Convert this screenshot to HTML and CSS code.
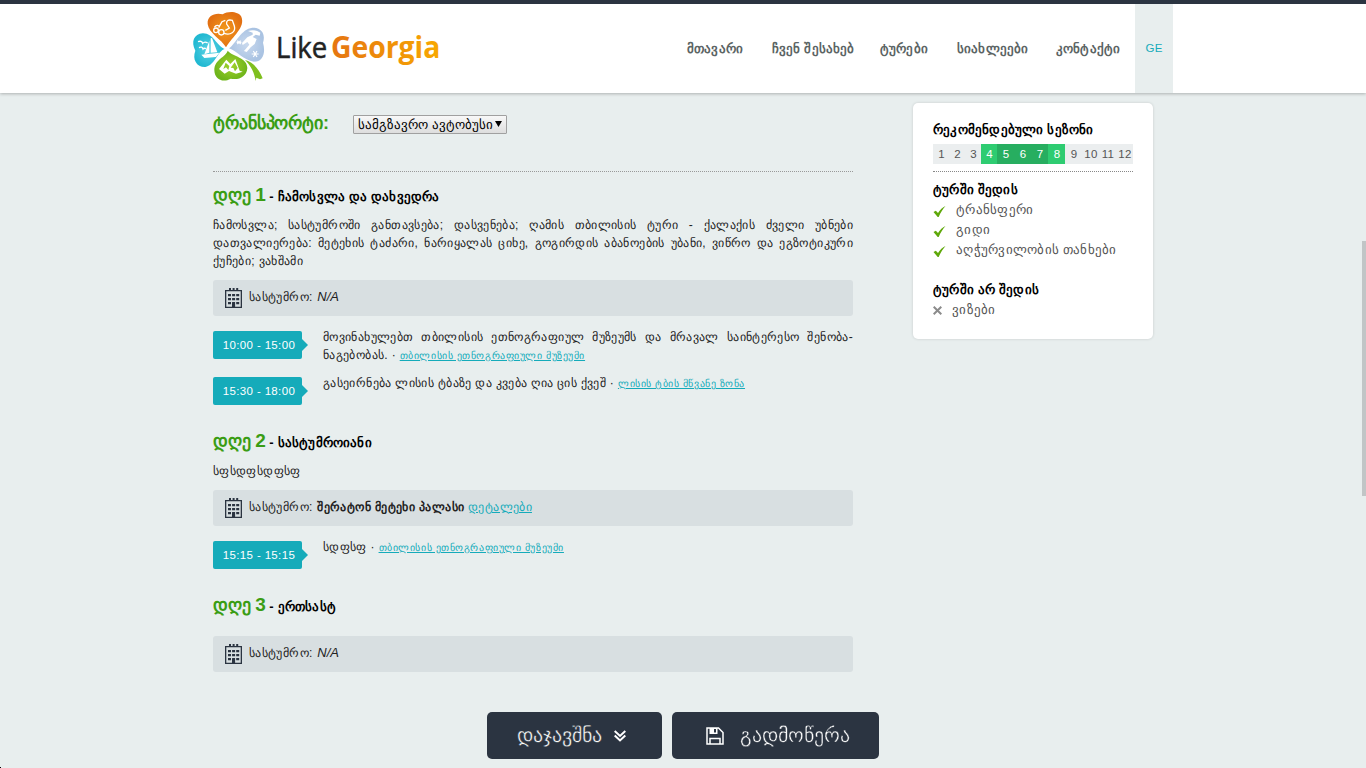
FILE: index.html
```html
<!DOCTYPE html>
<html>
<head>
<meta charset="utf-8">
<title>LikeGeorgia</title>
<link rel="stylesheet" href="styles.css">
</head>
<body>
<svg width="0" height="0" class="defs">
  <symbol id="hotel" viewBox="0 0 17 20">
    <path fill="#2b3441" fill-rule="evenodd" d="M0 2h17v18H0zM1.300 3.300v15.400H7V15h3v3.700h5.700V3.300z"/>
    <path fill="#2b3441" d="M4 0h2v2H4zM7.600 0h2v2h-2zM11.200 0h2v2h-2zM3 6h3v2.300H3zM7.100 6h3v2.300h-3zM11.200 6h3v2.300h-3zM3 10h3v2.300H3zM7.100 10h3v2.300h-3zM11.200 10h3v2.300h-3zM3 14h3v2.300H3zM7.100 14h3v5h-3zM11.200 14h3v2.300h-3z"/>
  </symbol>
  <symbol id="check" viewBox="0 0 12 11"><path fill="#5fa80a" d="M0 6 2.300 4.800 4.500 7C6.500 4 9 1.200 12 0 9.500 3 7 6.500 5.200 11L4.200 11z"/></symbol>
</svg>
<header class="top">
  <div class="wrap">
    <svg class="logo" viewBox="39 36 750 210">
      <defs>
        <radialGradient id="go"><stop offset="0" stop-color="#f39a1c"/><stop offset="1" stop-color="#e27012"/></radialGradient>
        <radialGradient id="gc"><stop offset="0" stop-color="#5cd2e4"/><stop offset="1" stop-color="#22b9d2"/></radialGradient>
        <radialGradient id="gb"><stop offset="0" stop-color="#c9d9ee"/><stop offset="1" stop-color="#aac3e2"/></radialGradient>
        <radialGradient id="gg"><stop offset="0" stop-color="#a2d22c"/><stop offset="1" stop-color="#6fb51b"/></radialGradient>
        <linearGradient id="gt"><stop offset="0" stop-color="#e57512"/><stop offset="1" stop-color="#f8a800"/></linearGradient>
      </defs>
      <path fill="url(#go)" d="M138 142C125 118 86 100 83 72 81 47 105 37 128 43 145 32 175 34 184 50 197 82 158 108 138 142z"/>
      <path fill="url(#gc)" d="M134 147C112 154 105 196 76 201 50 202 36 178 46 152 32 125 42 102 68 100 100 99 109 137 134 147z"/>
      <path fill="url(#gb)" d="M147 145C168 130 183 87 217 83 246 82 257 104 249 128 258 160 248 185 222 185 190 181 171 153 147 145z"/>
      <path fill="url(#gg)" d="M143 152C158 170 202 172 202 204 200 231 176 241 152 236 128 250 103 237 103 210 104 177 137 172 143 152z"/>
      <path fill="#7fbf1e" d="M195 180C218 186 236 205 248 235L240 238 229 233 227 243C224 218 211 196 195 180z"/>
      <g fill="none" stroke="#fff" stroke-width="4">
        <circle cx="108" cy="91" r="7"/><circle cx="124" cy="97" r="8"/><path d="M103 82C110 72 116 77 118 80M116 83 126 65 136 61M132 100C151 107 168 96 163 78L157 61C145 58 138 62 140 72L148 84 136 91"/>
      </g>
      <path fill="#fff" d="M92 115 96 114 112 157 92 158zM88 122V158L73 163zM64 164 118 158 108 171 73 174z"/>
      <path fill="none" stroke="#fff" stroke-width="4" d="M54 125Q65 121 68 130 74 123 83 129M57 143Q66 138 69 147 72 143 78 146"/>
      <path fill="#fff" d="M204 93Q224 86 241 98L239 107 227 104 218 111 230 117 224 132 212 142 200 156 192 153 208 134 202 126 188 135 186 129 202 112 218 104 218 98z"/>
      <path stroke="#fff" stroke-width="3.500" d="M220 153 231 171M231 153 220 171M215 162H236M172 122 182 132M182 122 172 132M170 127H184"/>
      <path fill="#fff" fill-rule="evenodd" d="M117 207 139 179 151 192 166 177 179 212 188 215 168 221 147 213 134 221zM137 188 130 207 138 202 145 210 148 198zM164 187 152 203 160 204 165 214 173 204z"/>
      <text class="like" x="288" y="174" textLength="154" lengthAdjust="spacingAndGlyphs">Like</text>
      <text class="geo" x="453" y="174" textLength="328" lengthAdjust="spacingAndGlyphs" fill="url(#gt)">Georgia</text>
    </svg>
    <nav class="nav"><a class="n1">მთავარი</a><a class="n2">ჩვენ შესახებ</a><a class="n3">ტურები</a><a class="n4">სიახლეები</a><a class="n5">კონტაქტი</a><a class="lang">GE</a></nav>
  </div>
</header>
<div class="wrap content">
  <main class="main">
    <div class="transport"><b>ტრანსპორტი:</b><span class="select">სამგზავრო ავტობუსი<i></i></span></div>
    <section>
      <h2><b>დღე <em>1</em></b> - ჩამოსვლა და დახვედრა</h2>
      <p><span class="full">ჩამოსვლა; სასტუმროში განთავსება; დასვენება; ღამის თბილისის ტური - ქალაქის ძველი უბნები</span><span class="full">დათვალიერება: მეტეხის ტაძარი, ნარიყალას ციხე, გოგირდის აბანოების უბანი, ვიწრო და ეგზოტიკური</span>ქუჩები; ვახშამი</p>
      <div class="hotel"><svg><use href="#hotel"/></svg><span>სასტუმრო: <i>N/A</i></span></div>
      <div class="event"><time>10:00 - 15:00</time><div><span class="full">მოვინახულებთ თბილისის ეთნოგრაფიულ მუზეუმს და მრავალ საინტერესო შენობა-</span>ნაგებობას. · <a>თბილისის ეთნოგრაფიული მუზეუმი</a></div></div>
      <div class="event"><time>15:30 - 18:00</time><div>გასეირნება ლისის ტბაზე და კვება ღია ცის ქვეშ · <a>ლისის ტბის მწვანე ზონა</a></div></div>
    </section>
    <section>
      <h2><b>დღე <em>2</em></b> - სასტუმროიანი</h2>
      <p>სფსდფსდფსფ</p>
      <div class="hotel"><svg><use href="#hotel"/></svg><span>სასტუმრო: <b>შერატონ მეტეხი პალასი</b> <a>დეტალები</a></span></div>
      <div class="event"><time>15:15 - 15:15</time><div>სდფსფ · <a>თბილისის ეთნოგრაფიული მუზეუმი</a></div></div>
    </section>
    <section>
      <h2><b>დღე <em>3</em></b> - ერთსასტ</h2>
      <div class="hotel"><svg><use href="#hotel"/></svg><span>სასტუმრო: <i>N/A</i></span></div>
    </section>
  </main>
  <aside class="card">
    <h3>რეკომენდებული სეზონი</h3>
    <div class="months"><span>1</span><span>2</span><span>3</span><span class="ok">4</span><span class="best">5</span><span class="best">6</span><span class="best">7</span><span class="ok">8</span><span>9</span><span>10</span><span>11</span><span>12</span></div>
    <h3>ტურში შედის</h3>
    <ul><li><svg><use href="#check"/></svg>ტრანსფერი</li><li><svg><use href="#check"/></svg>გიდი</li><li><svg><use href="#check"/></svg>აღჭურვილობის თანხები</li></ul>
    <h3>ტურში არ შედის</h3>
    <ul class="no"><li><svg viewBox="0 0 9 9"><path d="M.7.700 8.300 8.300M8.300.7.700 8.300" stroke="#8b8b8b" stroke-width="2"/></svg>ვიზები</li></ul>
  </aside>
</div>
<div class="actions">
  <a class="book"><span>დაჯავშნა</span><svg width="12" height="12" viewBox="0 0 12 12" fill="none" stroke="#fff" stroke-width="2"><path d="M.7 1 6 6 11.300 1M.7 5.500 6 10.500 11.300 5.500"/></svg></a>
  <a class="save"><svg width="18" height="18" viewBox="0 0 18 18" fill="none" stroke="#fff" stroke-width="1.500"><path d="M1 1H12.500L17 5.500V17H1zM4 17V11.500H14V17"/><path fill="#fff" stroke="none" d="M3.500 1H11.500V7H3.500zM8 2V5.500H10V2z" fill-rule="evenodd"/></svg><span>გადმოწერა</span></a>
</div>
<div class="scroll"></div>
<div class="corner"></div>
</body>
</html>
```
FILE: styles.css
```css
* { box-sizing: border-box; }
body { margin: 0; height: 768px; overflow: hidden; background: #e8eeee; color: #222; font: 12px/18px "Liberation Sans", "Noto Sans"; letter-spacing: .36px; }
h2, h3, p, ul { margin: 0; padding: 0; }
.defs { position: absolute; }
.wrap { width: 980px; margin: 0 auto; display: flex; justify-content: space-between; }
.top { height: 93px; border-top: 4px solid #2b3441; background: #fff; box-shadow: 0 1px 3px rgba(0,0,0,.25); }
.logo { width: 250px; height: 70px; margin-top: 8px; overflow: visible; }
.like { font: 90px "Open Sans", sans-serif; letter-spacing: 0; fill: #222; stroke: #222; stroke-width: 1.5px; }
.geo { font: bold 92px "Open Sans", sans-serif; letter-spacing: 0; }
.nav { display: flex; height: 89px; line-height: 89px; font-size: 13px; font-weight: bold; color: #5b6464; text-transform: uppercase; letter-spacing: .15px; }
.nav a { white-space: nowrap; color: inherit; }
.n1 { width: 85px; }
.n2 { width: 108px; }
.n3 { width: 77px; }
.n4 { width: 99px; }
.n5 { width: 79px; }
.nav .lang { width: 38px; text-align: center; background: #e8eeee; color: #15abba; font-weight: normal; font-size: 11.5px; }
.content { padding: 10px 20px 0; align-items: flex-start; }
.main { width: 640px; color: #222; }
.transport { height: 69px; display: flex; align-items: flex-start; padding-top: 11px; border-bottom: 1px dotted #999; }
.transport b { width: 140px; font-size: 18px; letter-spacing: -.1px; color: #3a9d14; }
.select { width: 154px; height: 19px; margin-top: 1px; padding-left: 4px; border: 1px solid #a0a0a0; border-radius: 1px; background: linear-gradient(#f8f8f8, #dedede); color: #000; font-size: 13px; line-height: 18px; letter-spacing: .02px; white-space: nowrap; display: flex; }
.select i { margin: 5px 0 0 2px; width: 7px; height: 6px; flex: none; background: #000; clip-path: polygon(0 0, 100% 0, 50% 100%); }
section { padding-bottom: 10px; }
h2 { height: 44px; padding-top: 11px; font-size: 13px; line-height: 24px; color: #000; letter-spacing: .18px; }
h2 b { font-size: 18px; color: #3a9d14; letter-spacing: -.2px; }
h2 em { font-style: normal; font-size: 19px; }
.full { display: block; text-align-last: justify; white-space: nowrap; }
.hotel { height: 36px; margin-top: 10px; padding-left: 12px; display: flex; align-items: center; gap: 7px; background: #d8dfe1; border-radius: 3px; }
.hotel svg { width: 17px; height: 20px; }
.hotel span { margin-top: -2px; }
.hotel i { font-size: 13px; letter-spacing: 0; margin-left: 1px; }
.hotel b { letter-spacing: .4px; margin-left: 1px; }
a { color: #15abba; }
.hotel a, .event a { text-decoration: underline; }
.event { display: flex; margin-top: 12px; min-height: 34px; }
.event + .event { margin-top: 9px; min-height: 34px; }
.event time { position: relative; width: 89px; height: 28px; margin: 3px 21px 0 0; padding-left: 3px; flex: none; font-size: 11.5px; line-height: 28px; text-align: center; background: #15abba; color: #fff; border-radius: 2px; letter-spacing: .35px; }
.event time::after { content: ""; position: absolute; left: 89px; top: 8px; border: 6px solid transparent; border-left-color: #15abba; border-right: 0; }
.event div { flex: 1; }
.event a { font-size: 10px; letter-spacing: .58px; }
.card { width: 240px; height: 236px; padding: 16px 20px; background: #fff; border-radius: 5px; box-shadow: 0 0 3px rgba(0,0,0,.15); font-size: 13px; line-height: 20px; color: #555; letter-spacing: .25px; }
.card h3 { font-size: 13px; line-height: 20px; color: #000; letter-spacing: .2px; }
.card h3:first-child { padding-top: 1px; margin-bottom: -1px; }
.months { height: 20px; margin: 5px 0 7px; background: #ebeeef; display: grid; grid-template-columns: 16px 16px 16px 16px 17px 17px 17px 17px 17px 17px 17px 17px; text-align: center; font-size: 11.5px; }
.months span { white-space: nowrap; padding-left: 1px; }
.ok { background: #2ecc71; color: #fff; }
.best { background: #27ae60; color: #fff; }
.months + h3 { border-top: 1px dotted #888; padding-top: 8px; }
.card ul { list-style: none; margin-bottom: 20px; }
.card li { display: flex; align-items: center; gap: 10px; }
.card li svg { width: 13px; height: 11px; margin-top: 2px; }
.card .no svg { width: 9px; height: 9px; margin-top: 1px; }
.actions { position: fixed; left: 487px; top: 712px; display: flex; gap: 10px; }
.actions a { height: 47px; display: flex; align-items: center; background: #2b3441; color: #fff; border-radius: 5px; font-size: 20px; line-height: 47px; text-transform: uppercase; letter-spacing: 0; -webkit-text-stroke: .4px #2b3441; }
.book { width: 175px; padding-left: 30px; gap: 10px; }
.book span { width: 87px; }
.save { width: 207px; padding-left: 34px; gap: 16px; }
.scroll { position: fixed; right: 0; top: 241px; width: 4px; height: 255px; background: #c1c5c6; }
.corner { position: fixed; left: 0; bottom: 0; width: 1px; height: 1px; background: #000; }
```
